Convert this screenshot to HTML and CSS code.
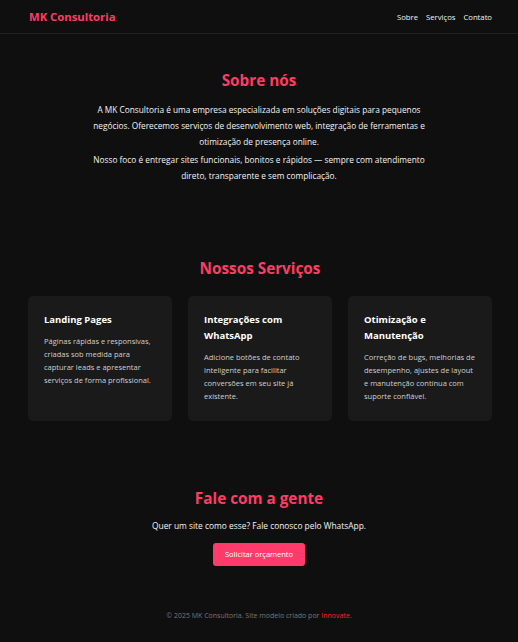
FILE: index.html
```html
<!DOCTYPE html>
<html lang="pt-BR">
<head>
<meta charset="utf-8">
<title>MK Consultoria</title>
<link rel="stylesheet" href="styles.css">
</head>
<body>
<header class="topbar">
  <div class="logo">MK Consultoria</div>
  <nav class="nav">
    <a href="#sobre">Sobre</a>
    <a href="#servicos">Serviços</a>
    <a href="#contato">Contato</a>
  </nav>
</header>
<main>
  <section class="about" id="sobre">
    <h2 class="title">Sobre nós</h2>
    <p>A MK Consultoria é uma empresa especializada em soluções digitais para pequenos negócios. Oferecemos serviços de desenvolvimento web, integração de ferramentas e otimização de presença online.</p>
    <p>Nosso foco é entregar sites funcionais, bonitos e rápidos — sempre com atendimento direto, transparente e sem complicação.</p>
  </section>
  <section class="services" id="servicos">
    <h2 class="title">Nossos Serviços</h2>
    <div class="cards">
      <div class="card">
        <h3>Landing Pages</h3>
        <p>Páginas rápidas e responsivas, criadas sob medida para capturar leads e apresentar serviços de forma profissional.</p>
      </div>
      <div class="card">
        <h3>Integrações com WhatsApp</h3>
        <p>Adicione botões de contato inteligente para facilitar conversões em seu site já existente.</p>
      </div>
      <div class="card">
        <h3>Otimização e Manutenção</h3>
        <p>Correção de bugs, melhorias de desempenho, ajustes de layout e manutenção contínua com suporte confiável.</p>
      </div>
    </div>
  </section>
  <section class="contact" id="contato">
    <h2 class="title">Fale com a gente</h2>
    <p>Quer um site como esse? Fale conosco pelo WhatsApp.</p>
    <a class="btn" href="#">Solicitar orçamento</a>
  </section>
</main>
<footer class="footer">© 2025 MK Consultoria. Site modelo criado por <span class="brand">Innovate.</span></footer>
</body>
</html>
```
FILE: styles.css
```css
* { box-sizing: border-box; }
html, body { margin: 0; padding: 0; }
body {
  background: #0f0f0f;
  color: #f4f4f4;
  font-family: "Open Sans", "Noto Sans", sans-serif;
  font-size: 8.3px;
  min-height: 642px;
}
a { color: inherit; text-decoration: none; }
.topbar {
  height: 34px;
  border-bottom: 1px solid #222;
  display: flex;
  align-items: center;
  justify-content: space-between;
  padding: 0 26px 0 29px;
}
.logo {
  color: #ff3c64;
  font-weight: 700;
  font-size: 11.3px;
}
.nav { display: flex; gap: 8px; font-size: 7.7px; }
.title {
  color: #ff3c64;
  font-weight: 700;
  font-size: 15.3px;
  text-align: center;
  margin: 0;
  line-height: 24px;
}
.about {
  padding-top: 34px;
  width: 345px;
  margin: 0 auto;
  text-align: center;
}
.about .title { margin-bottom: 10px; }
.about p { margin: 0 0 2px; line-height: 16px; font-size: 8.3px; }
.services { padding: 70px 26px 0 28px; }
.services .title { margin-bottom: 16px; }
.cards { display: grid; grid-template-columns: repeat(3, 1fr); gap: 16px; }
.card {
  background: #1a1a1a;
  border-radius: 5px;
  padding: 16px 16px 18px;
  min-height: 123px;
}
.card h3 { margin: 0 0 7px; font-size: 9.5px; line-height: 16px; font-weight: 700; color: #fff; }
.card p { margin: 0; font-size: 7.5px; line-height: 13px; color: #d0d0d0; }
.contact { padding-top: 65px; text-align: center; }
.contact .title { margin-bottom: 9px; }
.contact p { margin: 0 0 10px; font-size: 8.4px; line-height: 14px; }
.btn {
  display: inline-block;
  background: #ff3b6b;
  color: #fff;
  border-radius: 3px;
  padding: 0 12px;
  height: 23px;
  line-height: 23px;
  font-size: 7.5px;
}
.footer {
  text-align: center;
  color: #777;
  font-size: 7px;
  padding-top: 45px;
}
.brand { color: #ff1f2f; }
```
